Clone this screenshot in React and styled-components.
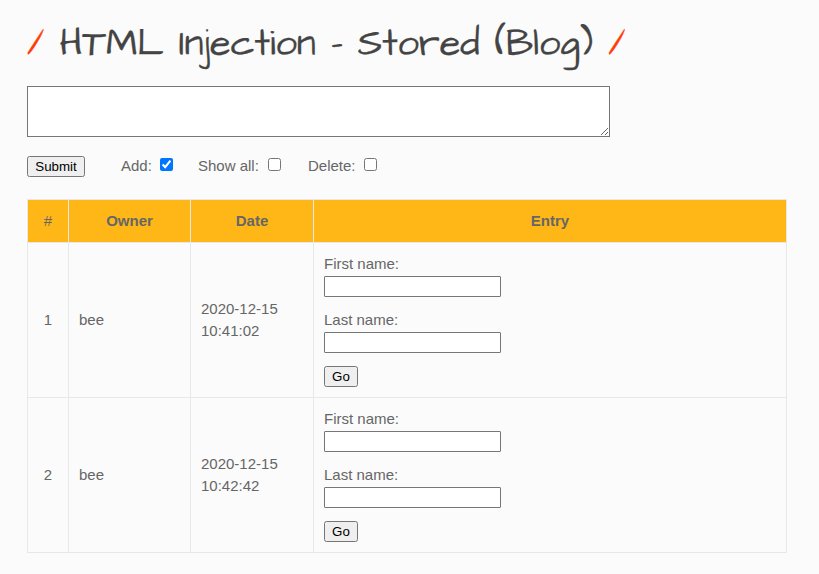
import React from "react";
import styled, { createGlobalStyle } from "styled-components";

const GlobalStyle = createGlobalStyle`
  * { box-sizing: border-box; }
  html { background: #fbfbfb; }
  body {
    margin: 0;
    color: #666;
    font: 15px/22px "Liberation Sans", Arial, sans-serif;
    overflow: hidden;
  }
`;

const Page = styled.main`
  display: flex;
  flex-direction: column;
  width: 819px;
  height: 574px;
  padding: 16px 32px 0 27px;
`;

const Title = styled.h1`
  height: 56px;
  margin: 0 0 14px;
  color: #444;
  font: 400 38px/56px "Architects Daughter", "Open Sans", "Noto Sans", sans-serif;
  letter-spacing: -0.06px;
  -webkit-text-stroke: 0.25px currentColor;
  white-space: nowrap;
`;

const Slash = styled.span`
  color: #ff3d0a;
`;

const EntryBox = styled.textarea`
  display: block;
  width: 583px;
  height: 51px;
  margin: 0;
  padding: 2px;
  border: 1px solid #767676;
  border-radius: 0;
  background: #fff;
  outline: none;
`;

const Toolbar = styled.div`
  display: flex;
  height: 22px;
  margin: 18px 0 22px;
`;

const Button = styled.button`
  display: block;
  width: ${(p) => p.$width}px;
  height: 21px;
  margin: ${(p) => p.$margin || "0"};
  padding: 0;
  border: 1px solid #767676;
  border-radius: 2.5px;
  background: #efefef;
  color: #000;
  font: 13.333px/17px "Liberation Sans", Arial, sans-serif;
`;

const Option = styled.label`
  display: flex;
  width: ${(p) => p.$width}px;
  margin-right: ${(p) => p.$gap || 0}px;
  justify-content: space-between;
`;

const Checkbox = styled.input`
  width: 13px;
  height: 13px;
  margin: 3px 0 0;
`;

const Table = styled.table`
  width: 760px;
  table-layout: fixed;
  border-collapse: collapse;
`;

const Column = styled.col`
  width: ${(p) => p.$width}px;
`;

const HeadCell = styled.th`
  height: 43px;
  padding: 0;
  border: 1px solid #e8e8e8;
  background: #ffb717;
  font-weight: ${(p) => (p.$plain ? 400 : 700)};
`;

const Cell = styled.td`
  height: 155px;
  padding: 0 10px;
  border: 1px solid #e8e8e8;
  text-align: ${(p) => p.$align || "left"};
  vertical-align: middle;
`;

const NameForm = styled.form`
  display: flex;
  flex-direction: column;
  align-items: flex-start;
  height: 134px;
`;

const Field = styled.label`
  display: block;
  height: 44px;
  margin-bottom: 12px;
`;

const TextInput = styled.input`
  display: block;
  width: 177px;
  height: 21px;
  margin: 1px 0 0;
  border: 1px solid #767676;
  border-radius: 1px;
  background: #fff;
`;

const entries = [
  { id: 1, owner: "bee", date: "2020-12-15", time: "10:41:02" },
  { id: 2, owner: "bee", date: "2020-12-15", time: "10:42:42" },
];

export default function App() {
  return (
    <>
      <GlobalStyle />
      <Page>
        <Title>
          <Slash>/</Slash> HTML Injection - Stored (Blog) <Slash>/</Slash>
        </Title>
        <EntryBox aria-label="Entry" />
        <Toolbar>
          <Button $width={58} $margin="1px 36px 0 0">Submit</Button>
          <Option $width={52} $gap={25}>Add:<Checkbox type="checkbox" defaultChecked /></Option>
          <Option $width={83} $gap={27}>Show all:<Checkbox type="checkbox" /></Option>
          <Option $width={69}>Delete:<Checkbox type="checkbox" /></Option>
        </Toolbar>
        <Table>
          <colgroup>
            <Column $width={41} />
            <Column $width={122} />
            <Column $width={123} />
            <Column />
          </colgroup>
          <thead>
            <tr>
              <HeadCell $plain>#</HeadCell>
              <HeadCell>Owner</HeadCell>
              <HeadCell>Date</HeadCell>
              <HeadCell>Entry</HeadCell>
            </tr>
          </thead>
          <tbody>
            {entries.map((entry) => (
              <tr key={entry.id}>
                <Cell $align="center">{entry.id}</Cell>
                <Cell>{entry.owner}</Cell>
                <Cell>{entry.date}<br />{entry.time}</Cell>
                <Cell>
                  <NameForm>
                    <Field>First name:<TextInput /></Field>
                    <Field>Last name:<TextInput /></Field>
                    <Button type="button" $width={34} $margin="1px 0 0">Go</Button>
                  </NameForm>
                </Cell>
              </tr>
            ))}
          </tbody>
        </Table>
      </Page>
    </>
  );
}
